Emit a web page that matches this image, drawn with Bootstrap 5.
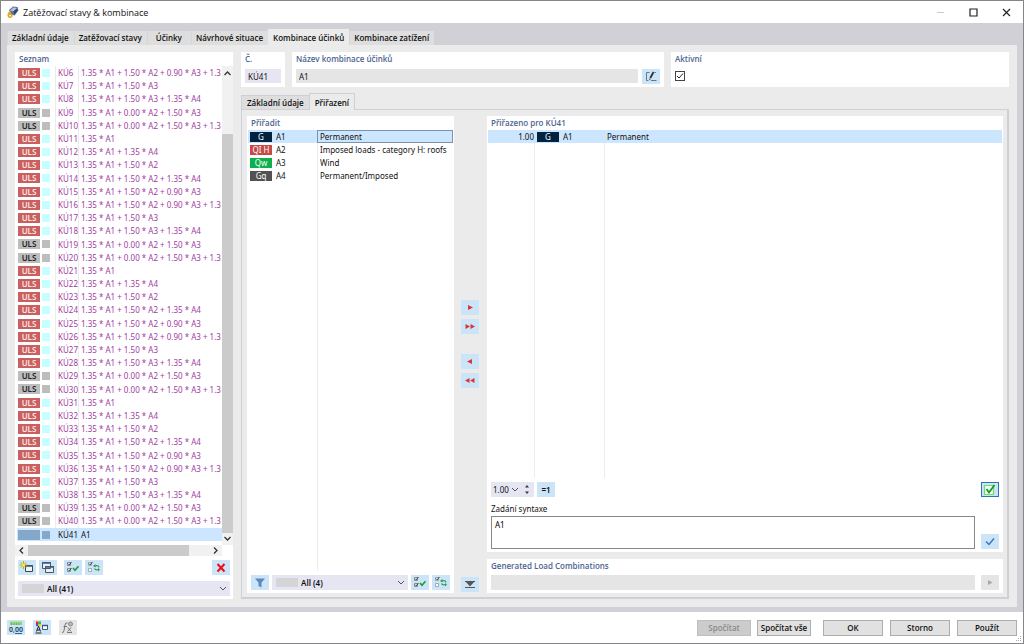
<!DOCTYPE html>
<html lang="cs">
<head>
<meta charset="utf-8">
<meta name="viewport" content="width=device-width, initial-scale=1">
<title>Zatěžovací stavy &amp; kombinace</title>
<link href="https://cdn.jsdelivr.net/npm/bootstrap@5.3.0/dist/css/bootstrap.min.css" rel="stylesheet">
<style>
  body { font: 8px/13px "Noto Sans", "Open Sans", sans-serif; color: #111; background: #d0d0d6; }
  .app-window { height: 100vh; min-height: 560px; border: 1px solid #86868a; overflow: hidden; }
  .title-bar { background: #fff; height: 22px; padding: 0 12px 0 5px; gap: 3px; font: 9px/13px "Open Sans", sans-serif; }
  .title-bar button { border: 0; background: none; padding: 0; display: flex; }
  .window-buttons { gap: 24px; }
  .tab-strip { padding: 6px 6px 0; align-items: flex-end; }
  .app-tab { border: 0; background: #dedede; color: #111; font-family: "Open Sans", sans-serif; font-weight: 600; line-height: 14px; height: 14px; padding: 0 5px; text-align: center; white-space: nowrap; box-shadow: inset 1px 0 #d6d6d9; }
  .app-tab.wide { padding: 0 9px; }
  .tab-strip .app-tab.active { height: 16px; line-height: 18px; background: #ebebeb; box-shadow: none; }
  .main-panel { background: #ebebeb; margin: 0 6px 5px; padding: 7px 8px 8px; gap: 8px; min-height: 0; }
  .white-panel { background: #fff; }
  .panel-label { display: block; color: #4d6490; font-family: "Open Sans", sans-serif; font-weight: 600; line-height: 14px; padding-left: 4px; }
  .list-panel { width: 218px; }
  .input-row { padding: 3px 4px 4px; }
  .shrinkable { min-height: 0; min-width: 0; }
  .field { border: 0; border-radius: 0; background: #e6e6f2; height: 14px; padding: 0 3px; font: inherit; color: #111; width: 100%; min-width: 0; }
  .field-grey { background: #e5e5e5; }
  .tbtn { width: 18px; height: 15px; flex: none; border: 0; padding: 0; background: #cce4f7; display: flex; align-items: center; justify-content: center; font: inherit; font-weight: 600; color: #111; }
  .tbtn.off { background: #e5e5e5; }
  .tbtn.framed { border: 1px solid #2a74bd; }
  .pick { position: relative; flex: 1; height: 15px; }
  .pick select { appearance: none; width: 100%; height: 15px; border: 0; border-radius: 0; background: #e6e6f2; font: inherit; font-weight: 600; color: #111; padding: 0 12px 0 29px; display: block; }
  .pick .swatch { position: absolute; left: 4px; top: 3px; width: 22px; height: 9px; background: #d5d5d8; }
  .pick svg { position: absolute; right: 3px; top: 5px; pointer-events: none; }
  .grid-table { border-collapse: separate; border-spacing: 0; table-layout: fixed; width: 100%; height: 100%; }
  .grid-table td { padding: 0 0 0 2px; white-space: nowrap; overflow: hidden; line-height: 13px; height: 13px; vertical-align: middle; }
  .grid-table td + td { border-left: 1px solid #ececec; }
  .grid-table tr.filler td { height: auto; }
  .grid-table tr.chosen td { background: #cce6ff; border-left-color: #cce6ff; }
  .grid-table.combos td { color: #a03ca0; height: auto; line-height: 11px; }
  .grid-table.combos td:first-child { padding-left: 1px; }
  .grid-table.combos .chosen td { color: #111; }
  .tag { display: inline-block; width: 22px; height: 10px; line-height: 10px; text-align: center; color: #fff; vertical-align: middle; margin-top: -2px; margin-right: 4px; }
  .combos .tag { margin-right: 2px; }
  .tag-uls { background: #c9605f; color: #fbe3e3; font-weight: 600; }
  .dot { display: inline-block; width: 8px; height: 8px; background: #c6ffff; vertical-align: middle; margin-top: -2px; }
  .inactive .tag-uls { background: #bdbdbd; color: #222; }
  .inactive .dot { background: #bdbdbd; }
  .chosen .tag-uls, .chosen .dot { background: #84a8ca; }
  .tag-g { background: #00233f; } .tag-q { background: #c34a48; } .tag-w { background: #0cb04c; } .tag-gq { background: #525252; }
  .grid-table tr.chosen td.focus-cell { outline: 1px solid #7a93a8; outline-offset: -1px; }
  .v-scroll { width: 11px; background: #f1f1f1; }
  .v-thumb, .h-thumb { background: #cbcbcb; }
  .h-thumb { width: 78%; }
  .h-scroll { height: 11px; background: #f1f1f1; margin-right: 11px; }
  .inner-tabs { margin-top: 7px; height: 15px; align-items: flex-end; }
  .inner-tabs .app-tab { border: 1px solid #cfcfd8; border-bottom: 0; box-shadow: none; }
  .inner-tabs .app-tab.active { background: #ebebeb; height: 17px; line-height: 17px; margin: 0 0 -1px -1px; z-index: 1; }
  .inner-panel { border: 1px solid #cfcfd8; border-right-width: 2px; border-bottom-width: 2px; padding: 6px 4px 4px 5px; }
  .assign-panel { width: 207px; }
  .transfer { width: 33px; padding: 184px 0 1px 7px; gap: 4px; }
  .transfer .apart { margin-top: 16px; }
  .tick { appearance: none; width: 10px; height: 10px; margin: 0; border: 1px solid #444; background: #fff; display: block; }
  .tick-box { position: relative; width: 10px; padding-top: 2px; }
  .tick-box svg { position: absolute; left: 1px; top: 3px; pointer-events: none; }
  .spin { position: relative; width: 43px; height: 15px; }
  .spin .field { height: 15px; padding-left: 2px; }
  .spin svg { position: absolute; right: 2px; top: 2px; pointer-events: none; }
  .syntax { flex: 1; height: 33px; border: 1px solid #888; border-radius: 0; resize: none; font: inherit; padding: 1px 3px; display: block; }
  .foot { background: #fff; height: 31px; padding: 8px 6px 0; position: relative; }
  .cmd { height: 16px; border: 1px solid #adadad; background: #e1e1e1; color: #111; font: 600 8px/14px "Open Sans", sans-serif; padding: 0; width: 60px; }
  .cmd.narrow { width: 54px; }
  .cmd:disabled { background: #ccc; border-color: #bfbfbf; color: #8a8a8a; }
  .grip { position: absolute; right: 1px; bottom: 1px; }
</style>
</head>
<body>
<svg width="0" height="0" class="position-absolute" aria-hidden="true">
  <symbol id="i-checks" viewBox="0 0 18 15">
    <path d="M3.500 2.500h3v3h-3zM3.500 8.500h3v3h-3z" fill="#fff" stroke="#777" stroke-width=".8"/>
    <path d="M4 3.600l1.200 1.200L7.400 2M4 9.600l1.200 1.200L7.400 8" fill="none" stroke="#333"/>
    <path d="M9 8l2 2.200 3.500-4" fill="none" stroke="#11a03c" stroke-width="1.600"/>
  </symbol>
  <symbol id="i-swap" viewBox="0 0 18 15">
    <path d="M3.500 2.500h3v3h-3zM3.500 8.500h3v3h-3z" fill="#fff" stroke="#8a9aa6" stroke-width=".8"/>
    <path d="M4 3.600l1.200 1.200L7.400 2" fill="none" stroke="#333"/>
    <path d="M10 6q3.500-1.200 4 1.500M13.500 9.500q-3 1-4-1" fill="none" stroke="#2f9a50" stroke-width="1.200"/>
    <path d="M10.500 4v3.600L8 6zM13 8v3.400l2-1.800z" fill="#2f9a50"/>
  </symbol>
  <symbol id="i-down" viewBox="0 0 8 5"><path d="M1 1l3 3 3-3" fill="none" stroke="#555"/></symbol>
</svg>

<div class="app-window d-flex flex-column">
  <header class="title-bar d-flex align-items-center">
    <svg width="14" height="14" viewBox="0 0 14 14" aria-hidden="true">
      <path d="M3 5l4-3.500 4.600.6.8 3.400-3.600 5-4-1z" fill="#5f7396"/><path d="M4 5.400l3.600-3 3.400.6-3.600 3.200z" fill="#b9c8de"/><path d="M7.400 6.400l3.800-3 .4 2-3.200 4.200z" fill="#2f4469"/>
      <path d="M5 7.400q-2.600-.4-2.800 2.400 0 2.400 1.800 2.400t1.800-1.700Q5.700 9 4.200 9 2.800 9 2.600 10.400" fill="none" stroke="#e0a81c" stroke-width="1.500"/>
    </svg>
    <span class="flex-grow-1">Zatěžovací stavy &amp; kombinace</span>
    <div class="window-buttons d-flex align-items-center">
      <button type="button" aria-label="Minimalizovat" disabled><svg width="9" height="9"><path d="M1 4.500h7" stroke="#ccc"/></svg></button>
      <button type="button" aria-label="Maximalizovat"><svg width="9" height="9"><path d="M1 1h7v7H1z" fill="none" stroke="#222" stroke-width="1.200"/></svg></button>
      <button type="button" aria-label="Zavřít"><svg width="9" height="9"><path d="M1 1l7 7M8 1L1 8" stroke="#222" stroke-width="1.200"/></svg></button>
    </div>
  </header>

  <nav class="tab-strip d-flex" role="tablist">
    <button class="app-tab" role="tab">Základní údaje</button>
    <button class="app-tab" role="tab">Zatěžovací stavy</button>
    <button class="app-tab wide" role="tab">Účinky</button>
    <button class="app-tab" role="tab">Návrhové situace</button>
    <button class="app-tab active" role="tab" aria-selected="true">Kombinace účinků</button>
    <button class="app-tab" role="tab">Kombinace zatížení</button>
  </nav>

  <main class="main-panel d-flex flex-grow-1">
    <section class="white-panel list-panel d-flex flex-column flex-shrink-0">
      <span class="panel-label">Seznam</span>
      <div class="d-flex flex-grow-1 shrinkable">
        <div class="flex-grow-1 overflow-hidden" style="padding:0 0 4px 2px">
          <table class="grid-table combos">
            <colgroup><col style="width:38px"><col style="width:23px"><col></colgroup>
            <tbody id="combos"></tbody>
          </table>
        </div>
        <div class="v-scroll d-flex flex-column align-items-center">
          <svg width="11" height="68" class="flex-shrink-0"><path d="M2.500 9l3-3 3 3" fill="none" stroke="#333" stroke-width="1.300"/></svg>
          <div class="v-thumb flex-grow-1 w-100"></div>
          <svg width="11" height="12" class="flex-shrink-0"><path d="M2.500 4l3 3 3-3" fill="none" stroke="#333" stroke-width="1.300"/></svg>
        </div>
      </div>
      <div class="h-scroll d-flex">
        <svg width="13" height="11"><path d="M8 2.500l-3 3 3 3" fill="none" stroke="#333" stroke-width="1.300"/></svg>
        <div class="h-thumb"></div>
        <svg width="12" height="11" class="ms-auto"><path d="M4 2.500l3 3-3 3" fill="none" stroke="#333" stroke-width="1.300"/></svg>
      </div>
      <div class="d-flex" style="padding:4px 3px 6px;gap:3px">
        <button class="tbtn" type="button" aria-label="Nová"><svg width="18" height="15"><path d="M7.500 5.500h7v6h-7z" fill="#eef5fb" stroke="#444"/><path d="M7 6h8" stroke="#3d5a80" stroke-width="1.500"/><path d="M5.500 1v8M1.500 5h8M2.700 2.200l5.600 5.600M8.300 2.200L2.700 7.800" stroke="#b8a800" stroke-width=".9"/><circle cx="5.500" cy="5" r="1.500" fill="#ffee30"/></svg></button>
        <button class="tbtn" type="button" aria-label="Kopírovat"><svg width="18" height="15"><path d="M3.500 2.500h8v6h-8zM6.500 6.500h8v6h-8z" fill="#e4eefa" stroke="#555"/><path d="M3 3h9M6 7h9" stroke="#3d5a80" stroke-width="1.500"/></svg></button>
        <button class="tbtn ms-1" type="button" aria-label="Vybrat vše"><svg width="18" height="15"><use href="#i-checks"/></svg></button>
        <button class="tbtn" type="button" aria-label="Obrátit výběr"><svg width="18" height="15"><use href="#i-swap"/></svg></button>
        <button class="tbtn ms-auto" type="button" aria-label="Smazat"><svg width="18" height="15"><path d="M5.500 4l7 7.500M12.500 4l-7 7.500" stroke="#f00c14" stroke-width="2"/></svg></button>
      </div>
      <div class="d-flex" style="padding:0 3px 3px">
        <div class="pick"><select aria-label="Filtr seznamu"><option>All (41)</option></select><span class="swatch"></span><svg width="8" height="5"><use href="#i-down"/></svg></div>
      </div>
    </section>

    <div class="d-flex flex-column flex-grow-1 shrinkable">
      <div class="d-flex" style="gap:7px">
        <div class="white-panel" style="width:44px">
          <label class="panel-label" for="num">Č.</label>
          <div class="input-row"><input class="field" id="num" value="KÚ41"></div>
        </div>
        <div class="white-panel" style="flex:11 1 0">
          <label class="panel-label" for="nm">Název kombinace účinků</label>
          <div class="input-row d-flex gap-1"><input class="field field-grey" id="nm" value="A1" readonly>
            <button class="tbtn" type="button" aria-label="Upravit název" style="margin-bottom:-1px"><svg width="18" height="15"><path d="M7.500 3.500h-3v8h2M9 11.500h5.500M12.500 3.500h1.500" fill="none" stroke="#678" /><path d="M8.300 9l3.200-6" stroke="#333" stroke-width="1.800"/><path d="M7.200 11.200l.3-2 1.400.8z" fill="#333"/></svg></button>
          </div>
        </div>
        <div class="white-panel" style="flex:10 1 0">
          <label class="panel-label" for="act">Aktivní</label>
          <div class="input-row"><div class="tick-box"><input class="tick" type="checkbox" id="act" checked><svg width="8" height="8"><path d="M1 4l2 2 4-4.500" fill="none" stroke="#222"/></svg></div></div>
        </div>
      </div>

      <div class="inner-tabs d-flex" role="tablist">
        <button class="app-tab" role="tab">Základní údaje</button>
        <button class="app-tab active" role="tab" aria-selected="true">Přiřazení</button>
      </div>

      <div class="inner-panel d-flex flex-grow-1 shrinkable">
        <section class="white-panel assign-panel d-flex flex-column flex-shrink-0">
          <span class="panel-label">Přiřadit</span>
          <div class="flex-grow-1 shrinkable" style="padding:0 1px">
            <table class="grid-table">
              <colgroup><col style="width:69px"><col></colgroup>
              <tbody>
                <tr class="chosen"><td><span class="tag tag-g">G</span>A1</td><td class="focus-cell">Permanent</td></tr>
                <tr><td><span class="tag tag-q">QI H</span>A2</td><td>Imposed loads - category H: roofs</td></tr>
                <tr><td><span class="tag tag-w">Qw</span>A3</td><td>Wind</td></tr>
                <tr><td><span class="tag tag-gq">Gq</span>A4</td><td>Permanent/Imposed</td></tr>
                <tr class="filler"><td></td><td></td></tr>
              </tbody>
            </table>
          </div>
          <div class="d-flex" style="padding:4px 4px 3px;gap:3px">
            <button class="tbtn" type="button" aria-label="Filtr"><svg width="18" height="15"><path d="M4 3.500h10L10.500 7.500v5l-3-1.500V7.500z" fill="#5c86c4"/></svg></button>
            <div class="pick"><select aria-label="Filtr účinků"><option>All (4)</option></select><span class="swatch"></span><svg width="8" height="5"><use href="#i-down"/></svg></div>
            <button class="tbtn" type="button" aria-label="Vybrat vše"><svg width="18" height="15"><use href="#i-checks"/></svg></button>
            <button class="tbtn" type="button" aria-label="Obrátit výběr"><svg width="18" height="15"><use href="#i-swap"/></svg></button>
          </div>
        </section>

        <div class="transfer d-flex flex-column flex-shrink-0">
          <button class="tbtn" type="button" aria-label="Přidat"><svg width="18" height="15"><path d="M7 5l5 2.500-5 2.500z" fill="#d93636"/></svg></button>
          <button class="tbtn" type="button" aria-label="Přidat vše"><svg width="18" height="15"><path d="M4.500 5l4.500 2.500-4.500 2.500zM9.500 5l4.500 2.500-4.500 2.500z" fill="#d93636"/></svg></button>
          <button class="tbtn apart" type="button" aria-label="Odebrat"><svg width="18" height="15"><path d="M11 5L6 7.500l5 2.500z" fill="#d93636"/></svg></button>
          <button class="tbtn" type="button" aria-label="Odebrat vše"><svg width="18" height="15"><path d="M8.500 5L4 7.500 8.500 10zM13.500 5L9 7.500l4.500 2.500z" fill="#d93636"/></svg></button>
          <button class="tbtn mt-auto" type="button" aria-label="Sbalit"><svg width="18" height="15"><path d="M4 4.500h10M4 10.500h10" stroke="#555"/><path d="M5 5h8L9 9.500z" fill="#555"/></svg></button>
        </div>

        <div class="d-flex flex-column flex-grow-1 shrinkable" style="gap:7px">
          <section class="white-panel d-flex flex-column flex-grow-1 shrinkable">
            <span class="panel-label">Přiřazeno pro KÚ41</span>
            <div class="flex-grow-1 shrinkable" style="padding:0 1px">
              <table class="grid-table">
                <colgroup><col style="width:46px"><col style="width:70px"><col></colgroup>
                <tbody>
                  <tr class="chosen"><td class="text-end">1.00</td><td><span class="tag tag-g">G</span>A1</td><td>Permanent</td></tr>
                  <tr class="filler"><td></td><td></td><td></td></tr>
                </tbody>
              </table>
            </div>
            <div class="d-flex" style="padding:4px 4px 0;gap:3px">
              <div class="spin"><input class="field" value="1.00" aria-label="Součinitel"><svg width="22" height="11"><path d="M2 4l3 3 3-3" fill="none" stroke="#555"/><path d="M15 3.500h4l-2-2.500zM15 7.500h4l-2 2.500z" fill="#333"/></svg></div>
              <button class="tbtn" type="button">=1</button>
              <button class="tbtn framed ms-auto" type="button" aria-label="Automaticky"><svg width="14" height="13"><path d="M1.500 2.500h9v9h-9z" fill="#f3fff3" stroke="#6fdc6f" stroke-width="1.200"/><path d="M3.500 6l2.500 3.500L11.500 2" fill="none" stroke="#0e9a1e" stroke-width="1.700"/></svg></button>
            </div>
            <label for="syn" style="padding:5px 4px 1px">Zadání syntaxe</label>
            <div class="d-flex align-items-end" style="padding:0 4px 3px;gap:6px">
              <textarea class="syntax" id="syn">A1</textarea>
              <button class="tbtn" type="button" aria-label="Potvrdit"><svg width="18" height="15"><path d="M5 7.500l3 3 5-6" fill="none" stroke="#3a78c2" stroke-width="1.500"/></svg></button>
            </div>
          </section>
          <section class="white-panel">
            <label class="panel-label" for="gen">Generated Load Combinations</label>
            <div class="d-flex" style="padding:2px 4px 3px;gap:6px">
              <input class="field field-grey" id="gen" style="height:15px" readonly>
              <button class="tbtn off" type="button" aria-label="Další" disabled><svg width="18" height="15"><path d="M7 5l4.500 2.500L7 10z" fill="#a8a8a8"/></svg></button>
            </div>
          </section>
        </div>
      </div>
    </div>
  </main>

  <footer class="foot d-flex align-items-start">
    <div class="d-flex gap-2">
      <button class="tbtn" type="button" aria-label="Jednotky"><svg width="18" height="15"><path d="M3 1.500h12v3.500H3z" fill="#8fd67f"/><path d="M4.500 3v2M7 3v2M9.500 3v2M12 3v2" stroke="#5cae50" stroke-width=".8"/><text x="2" y="12" font-size="7" font-weight="600" fill="#173a5e">0,00</text><path d="M8 13.500h7" stroke="#2c64a8"/></svg></button>
      <button class="tbtn" type="button" aria-label="Zobrazení"><svg width="18" height="15"><path d="M3 1.500h2.500V4H3z" fill="#e22"/><path d="M5.500 1.500H8V4H5.500z" fill="#3b3"/><path d="M3 4h2.500v2H3z" fill="#26d"/><path d="M5.500 4H8v2H5.500z" fill="#fc0"/><path d="M3.500 11.500L5.500 6l2 5.500M4 10h3M2.500 13h6" fill="none" stroke="#222"/><path d="M9.500 5.500h5v4h-5z" fill="#fff" stroke="#3d5a80"/><path d="M9 5.500h6" stroke="#3d5a80" stroke-width="1.500"/></svg></button>
      <button class="tbtn off" type="button" aria-label="Vzorec" disabled><svg width="18" height="15"><path d="M8.500 3Q6.500 2 6 5L5 10.500Q4.600 13 3 12.500M4.500 6.500h3.500" fill="none" stroke="#777"/><path d="M9 7.500l3 4M12 7.500l-3.500 4M8 12.500h5" stroke="#777" fill="none"/><circle cx="11.500" cy="4" r="2" fill="#bbb" stroke="#888"/></svg></button>
    </div>
    <div class="d-flex ms-auto">
      <button class="cmd narrow" type="button" disabled style="margin-right:6px">Spočítat</button>
      <button class="cmd narrow" type="button" style="margin-right:12px">Spočítat vše</button>
      <div class="d-flex" style="gap:7px">
        <button class="cmd" type="button">OK</button>
        <button class="cmd" type="button">Storno</button>
        <button class="cmd" type="button">Použít</button>
      </div>
    </div>
    <svg class="grip" width="6" height="6"><path d="M4 0h1v1H4zM2 2h1v1H2zM4 2h1v1H4zM0 4h1v1H0zM2 4h1v1H2zM4 4h1v1H4z" fill="#aaa"/></svg>
  </footer>
</div>

<script src="https://cdn.jsdelivr.net/npm/bootstrap@5.3.0/dist/js/bootstrap.bundle.min.js"></script>
<script>
  // The combinations repeat in a cycle of ten; two of each cycle are inactive.
  const cycle = [
    ['1.35 * A1'],
    ['1.35 * A1 + 1.35 * A4'],
    ['1.35 * A1 + 1.50 * A2'],
    ['1.35 * A1 + 1.50 * A2 + 1.35 * A4'],
    ['1.35 * A1 + 1.50 * A2 + 0.90 * A3'],
    ['1.35 * A1 + 1.50 * A2 + 0.90 * A3 + 1.3'],
    ['1.35 * A1 + 1.50 * A3'],
    ['1.35 * A1 + 1.50 * A3 + 1.35 * A4'],
    ['1.35 * A1 + 0.00 * A2 + 1.50 * A3', true],
    ['1.35 * A1 + 0.00 * A2 + 1.50 * A3 + 1.3', true]
  ];
  let rows = '';
  for (let n = 6; n <= 40; n++) {
    const [formula, inactive] = cycle[(n - 1) % 10];
    rows += `<tr${inactive ? ' class="inactive"' : ''}><td><span class="tag tag-uls">ULS</span><span class="dot"></span></td><td>KÚ${n}</td><td>${formula}</td></tr>`;
  }
  rows += '<tr class="chosen"><td><span class="tag tag-uls"></span><span class="dot"></span></td><td>KÚ41</td><td>A1</td></tr>';
  document.getElementById('combos').innerHTML = rows;
</script>
</body>
</html>
